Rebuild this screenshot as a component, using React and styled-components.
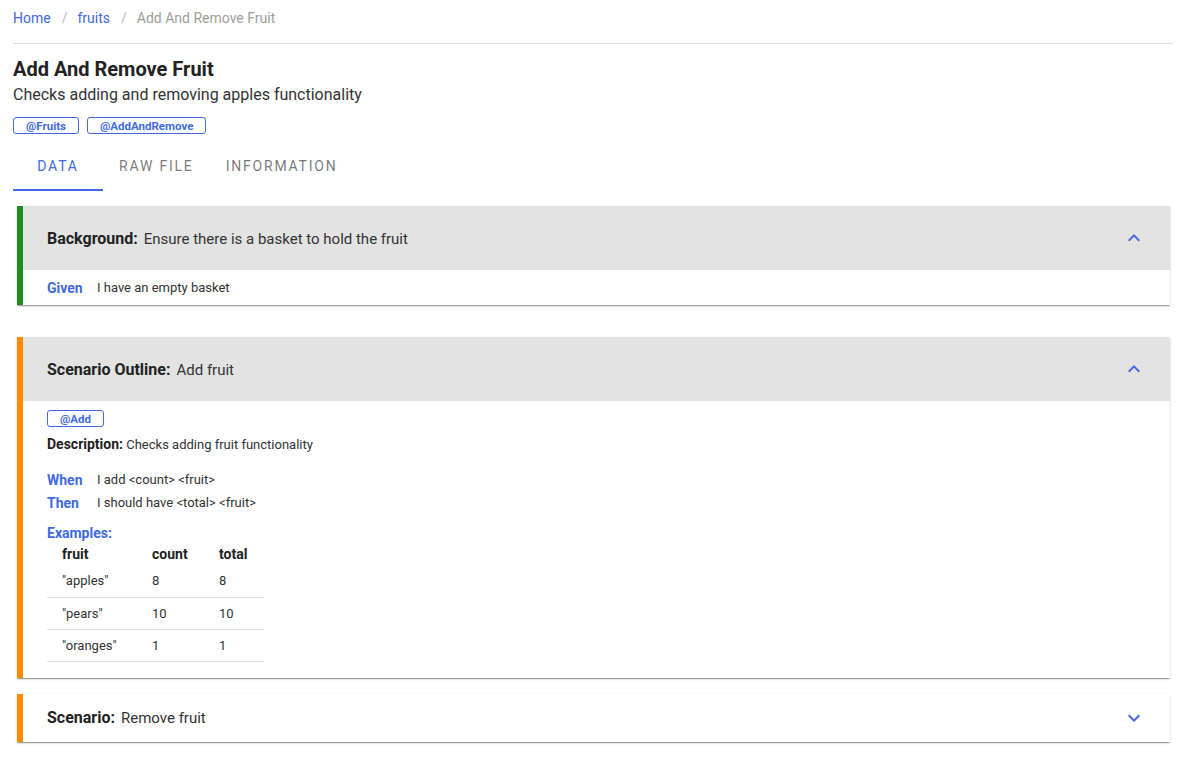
import React from "react";
import styled, { createGlobalStyle } from "styled-components";

const GlobalStyle = createGlobalStyle`
  body {
    margin: 0;
    background: #fff;
    font-family: Roboto, "Liberation Sans", Arial, sans-serif;
    color: rgba(0, 0, 0, 0.87);
  }
`;

const Page = styled.div`
  padding: 0 16px 0 13px;
`;

const Crumbs = styled.nav`
  display: flex;
  align-items: center;
  height: 36px;
  padding-bottom: 7px;
  font-size: 14px;
  border-bottom: 1px solid #e0e0e0;
  margin-bottom: 13px;
`;

const Crumb = styled.span`
  color: ${(p) => (p.$current ? "#9e9e9e" : "#4169e1")};
`;

const Sep = styled.span`
  color: #bdbdbd;
  margin: 0 10px 0 11px;
`;

const Title = styled.h1`
  margin: 0;
  font-size: 20px;
  font-weight: 700;
  line-height: 24px;
  color: #222;
`;

const Subtitle = styled.p`
  margin: 2px 0 0;
  font-size: 16px;
  line-height: 24px;
  color: #333;
`;

const Tags = styled.div`
  display: flex;
  gap: 8px;
  margin-top: 10px;
`;

const Tag = styled.span`
  display: inline-flex;
  align-items: center;
  justify-content: center;
  box-sizing: border-box;
  height: 17px;
  padding: 0 12px;
  min-width: ${(p) => p.$min || 0}px;
  border: 1px solid #4169e1;
  border-radius: 3px;
  color: #4169e1;
  font-size: 11.5px;
  font-weight: 700;
`;

const TabBar = styled.div`
  display: flex;
  margin-top: 9px;
  height: 48px;
`;

const Tab = styled.div`
  box-sizing: border-box;
  min-width: 90px;
  padding: 0 16px;
  display: flex;
  align-items: center;
  justify-content: center;
  font-size: 14px;
  letter-spacing: 1.8px;
  text-transform: uppercase;
  color: ${(p) => (p.$active ? "#4169e1" : "rgba(0,0,0,0.55)")};
  border-bottom: 2px solid ${(p) => (p.$active ? "#4169e1" : "transparent")};
`;

const Cards = styled.div`
  padding: 15px 3px 0 4px;
`;

const Card = styled.section`
  background: #fff;
  border-left: 6px solid ${(p) => p.$accent};
  margin-bottom: ${(p) => p.$gap || 16}px;
  box-shadow: 0px 2px 1px -1px rgba(0, 0, 0, 0.2),
    0px 1px 1px 0px rgba(0, 0, 0, 0.14), 0px 1px 3px 0px rgba(0, 0, 0, 0.12);
`;

const Summary = styled.div`
  display: flex;
  align-items: center;
  justify-content: space-between;
  height: ${(p) => (p.$open ? 64 : 48)}px;
  padding: 0 24px;
  background: ${(p) => (p.$open ? "#e3e3e3" : "#fff")};
  font-size: 15px;
  color: #333;
`;

const Keyword = styled.b`
  font-size: 16px;
  font-weight: 700;
  color: #222;
  margin-right: 6px;
`;

const Chevron = ({ up }) => (
  <svg width="24" height="24" viewBox="0 0 24 24" fill="#4169e1">
    {up ? (
      <path d="M12 8l-6 6 1.41 1.41L12 10.83l4.59 4.58L18 14z" />
    ) : (
      <path d="M16.59 8.59L12 13.17 7.41 8.59 6 10l6 6 6-6z" />
    )}
  </svg>
);

const Details = styled.div`
  padding: ${(p) => p.$pad || "0 24px 16px"};
  font-size: 13px;
  color: #333;
`;

const Step = styled.div`
  display: flex;
  align-items: center;
  height: ${(p) => p.$h || 23}px;
`;

const StepWord = styled.span`
  width: 50px;
  font-weight: 700;
  font-size: 14px;
  color: #4169e1;
`;

const Description = styled.div`
  margin: 9px 0 15px;
  line-height: 16px;
  b {
    font-size: 14px;
    font-weight: 700;
    color: #222;
  }
`;

const Steps = styled.div`
  margin-bottom: 10px;
`;

const ExamplesLabel = styled.div`
  font-weight: 700;
  font-size: 14px;
  color: #4169e1;
  line-height: 18px;
`;

const Table = styled.table`
  border-collapse: collapse;
  margin-top: 1px;
  th,
  td {
    box-sizing: border-box;
    padding: 0 0 0 15px;
    text-align: left;
  }
  th {
    height: 22px;
    font-size: 14px;
    font-weight: 700;
    color: #222;
  }
  td {
    height: 32px;
    border-bottom: 1px solid #e0e0e0;
  }
  tbody tr {
    height: 32px;
  }
  th:nth-child(1) {
    width: 90px;
  }
  th:nth-child(2) {
    width: 67px;
  }
  th:nth-child(3) {
    width: 60px;
  }
`;

const Background = () => (
  <Card $accent="#228b22" $gap={32}>
    <Summary $open>
      <span>
        <Keyword>Background:</Keyword>Ensure there is a basket to hold the fruit
      </span>
      <Chevron up />
    </Summary>
    <Details $pad="0 24px">
      <Step $h={35}>
        <StepWord>Given</StepWord>I have an empty basket
      </Step>
    </Details>
  </Card>
);

const rows = [
  ['"apples"', "8", "8"],
  ['"pears"', "10", "10"],
  ['"oranges"', "1", "1"],
];

const Outline = () => (
  <Card $accent="#ff8c00">
    <Summary $open>
      <span>
        <Keyword>Scenario Outline:</Keyword>Add fruit
      </span>
      <Chevron up />
    </Summary>
    <Details $pad="9px 24px 16px">
      <Tag $min={57}>@Add</Tag>
      <Description>
        <b>Description:</b> Checks adding fruit functionality
      </Description>
      <Steps>
        <Step>
          <StepWord>When</StepWord>I add &lt;count&gt; &lt;fruit&gt;
        </Step>
        <Step>
          <StepWord>Then</StepWord>I should have &lt;total&gt; &lt;fruit&gt;
        </Step>
      </Steps>
      <ExamplesLabel>Examples:</ExamplesLabel>
      <Table>
        <thead>
          <tr>
            <th>fruit</th>
            <th>count</th>
            <th>total</th>
          </tr>
        </thead>
        <tbody>
          {rows.map((r) => (
            <tr key={r[0]}>
              {r.map((c, i) => (
                <td key={i}>{c}</td>
              ))}
            </tr>
          ))}
        </tbody>
      </Table>
    </Details>
  </Card>
);

const Removal = () => (
  <Card $accent="#ff8c00">
    <Summary>
      <span>
        <Keyword>Scenario:</Keyword>Remove fruit
      </span>
      <Chevron />
    </Summary>
  </Card>
);

export default function App() {
  return (
    <Page>
      <GlobalStyle />
      <Crumbs>
        <Crumb>Home</Crumb>
        <Sep>/</Sep>
        <Crumb>fruits</Crumb>
        <Sep>/</Sep>
        <Crumb $current>Add And Remove Fruit</Crumb>
      </Crumbs>
      <Title>Add And Remove Fruit</Title>
      <Subtitle>Checks adding and removing apples functionality</Subtitle>
      <Tags>
        <Tag>@Fruits</Tag>
        <Tag>@AddAndRemove</Tag>
      </Tags>
      <TabBar>
        <Tab $active>Data</Tab>
        <Tab>Raw File</Tab>
        <Tab>Information</Tab>
      </TabBar>
      <Cards>
        <Background />
        <Outline />
        <Removal />
      </Cards>
    </Page>
  );
}
